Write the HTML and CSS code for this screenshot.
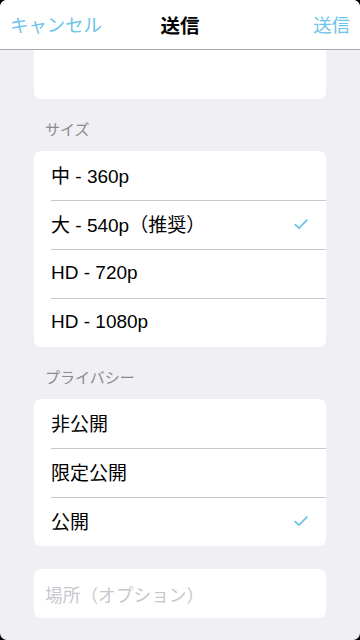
FILE: index.html
```html
<!DOCTYPE html>
<html lang="ja">
<head>
<meta charset="utf-8">
<link rel="stylesheet" href="styles.css">
</head>
<body>
<div class="screen">
  <header class="nav">
    <span class="nav-btn nav-left">キャンセル</span>
    <span class="nav-title">送信</span>
    <span class="nav-btn nav-right">送信</span>
  </header>
  <main class="content">
    <div class="card card-top"></div>

    <div class="label">サイズ</div>
    <div class="card">
      <div class="row"><span>中 - 360p</span></div>
      <div class="row"><span>大 - 540p（推奨）</span>
        <svg class="check" width="14" height="11" viewBox="0 0 14 11"><polyline points="1.2,5.6 5,9.2 12.8,1.2" fill="none" stroke="#6cc4ea" stroke-width="1.8" stroke-linecap="round" stroke-linejoin="round"/></svg>
      </div>
      <div class="row"><span>HD - 720p</span></div>
      <div class="row"><span>HD - 1080p</span></div>
    </div>

    <div class="label">プライバシー</div>
    <div class="card">
      <div class="row"><span>非公開</span></div>
      <div class="row"><span>限定公開</span></div>
      <div class="row"><span>公開</span>
        <svg class="check" width="14" height="11" viewBox="0 0 14 11"><polyline points="1.2,5.6 5,9.2 12.8,1.2" fill="none" stroke="#6cc4ea" stroke-width="1.8" stroke-linecap="round" stroke-linejoin="round"/></svg>
      </div>
    </div>

    <div class="card card-input">
      <span class="placeholder">場所（オプション）</span>
    </div>
  </main>
</div>
</body>
</html>
```
FILE: styles.css
```css
* { box-sizing: border-box; }
html, body {
  margin: 0;
  padding: 0;
  background: #000;
  width: 360px;
  height: 640px;
  overflow: hidden;
}
.screen {
  width: 360px;
  height: 640px;
  background: #efeff4;
  border-radius: 7px;
  overflow: hidden;
  font-family: "Liberation Sans", "Noto Sans CJK JP", sans-serif;
}
.nav {
  height: 50px;
  background: #fff;
  border-bottom: 1px solid #a9a9ad;
  display: grid;
  grid-template-columns: 1fr auto 1fr;
  align-items: center;
  padding: 0 10px 1px 10px;
}
.nav-btn {
  color: #6cc4ea;
  font-size: 18.4px;
}
.nav-left { justify-self: start; }
.nav-right { justify-self: end; }
.nav-title {
  color: #000;
  font-size: 19.5px;
  font-weight: bold;
}
.content {
  padding: 0 34px;
}
.card {
  background: #fff;
  border-radius: 7px;
  overflow: hidden;
}
.card-top {
  height: 49px;
  border-radius: 0 0 7px 7px;
}
.label {
  height: 52px;
  padding: 21px 0 0 11px;
  font-size: 15px;
  line-height: 20px;
  color: #8a8a8f;
}
.row {
  position: relative;
  height: 49px;
  display: flex;
  align-items: center;
  justify-content: space-between;
  padding: 0 18px 2px 17px;
  font-size: 19px;
  color: #000;
}
.row + .row::before {
  content: "";
  position: absolute;
  left: 17px;
  right: 0;
  top: 0;
  height: 1px;
  background: #c8c7cc;
}
.check {
  display: block;
  margin-top: 2px;
}
.card-input {
  margin-top: 23px;
  height: 49px;
  display: flex;
  align-items: center;
  padding-left: 11px;
}
.placeholder {
  font-size: 17.7px;
  color: #c7c7cd;
}
```
